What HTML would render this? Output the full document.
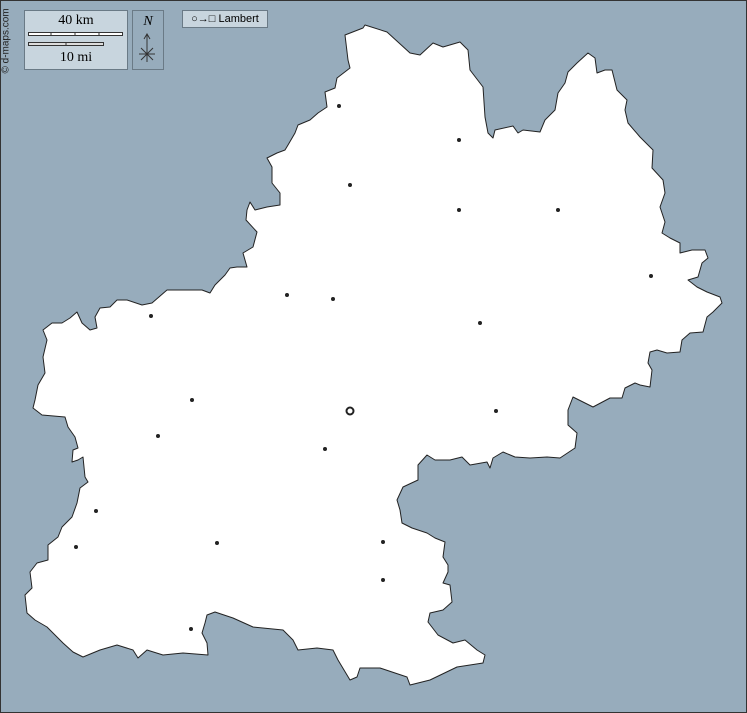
<!DOCTYPE html>
<html><head><style>
body{margin:0;width:747px;height:713px;overflow:hidden;background:#97acbc;font-family:"Liberation Serif",serif}
.box{position:absolute;background:#c8d5de;border:1px solid #6a7a86}
</style></head><body>
<svg width="747" height="713" style="position:absolute;left:0;top:0">
<rect x="0.5" y="0.5" width="746" height="712" fill="#97acbc" stroke="#333"/>
<polygon fill="#fff" stroke="#222" stroke-width="1" stroke-linejoin="round" points="
345,35 348,60 350,68 337,78 335,88 325,92 327,107 318,113 310,120 298,125 295,133 288,145 285,150 277,153 267,158 272,167 272,183 280,193 280,205 267,207 255,210 250,202 247,210 246,220 257,232 253,247 243,253 247,267 237,267 230,268 225,275 215,285
210,293 202,290 167,290 152,303 142,305 127,300 117,300 110,307 100,308 95,317 97,328 90,330 82,323 77,312 70,318 62,323 52,323 43,330 47,340 43,357 45,373 38,385 35,400 33,408 42,415 65,417 68,427 75,437 78,448 73,450 72,462 78,460 83,457 85,477 88,482 80,488 77,503 72,517 62,527 58,537 48,545 48,560 37,563 30,572 32,588 25,595 27,613 35,620 47,627 63,643 73,652 83,657 100,650 117,645 133,650 138,658 147,650 163,655 183,653 208,655 207,643 202,633 205,623 207,615 215,612 233,618 253,627 283,630 293,640 298,650 317,648 333,650 338,660 350,680 357,677 360,668 380,668 407,677 410,685 430,680 457,667 483,663 485,655 477,650 465,640 453,643 438,635 428,622 430,613 443,610 452,602 450,585 443,583 448,572 448,565 443,557 445,542 435,538 427,533 412,528 402,523 400,510 397,500 403,487 418,480 418,465 427,455 435,460 450,460 462,457 470,465 487,462
490,468 493,458 503,452 515,457 530,458 547,457 560,458 575,448 577,433 568,425 568,410 573,397 583,402 593,407 610,398 622,398 625,388 635,383 640,385 650,387 652,370 648,363 650,352 657,350 667,353 680,352 682,340 690,333 703,332 707,317 713,312 722,303 720,297 707,292 697,287 688,280 698,277 702,263 708,258 705,250 692,250 680,253 680,243 670,238 662,233 665,222 660,207 665,193 663,180 652,168 653,150 640,137 628,123 625,110 627,100 617,90 612,70 605,70 597,73 595,58 588,53 577,63 568,72 565,83 558,93 555,110 545,120 540,132 523,130 518,133 513,126 495,130 493,138
488,133 485,117 483,87 470,70 468,50 460,42 443,47 433,43 420,55 410,53 387,32 365,25 363,28"/>
<g fill="#222">
<circle cx="339" cy="106" r="2"/><circle cx="459" cy="140" r="2"/><circle cx="350" cy="185" r="2"/><circle cx="459" cy="210" r="2"/><circle cx="558" cy="210" r="2"/><circle cx="651" cy="276" r="2"/><circle cx="287" cy="295" r="2"/><circle cx="333" cy="299" r="2"/><circle cx="151" cy="316" r="2"/><circle cx="480" cy="323" r="2"/><circle cx="192" cy="400" r="2"/><circle cx="496" cy="411" r="2"/><circle cx="158" cy="436" r="2"/><circle cx="325" cy="449" r="2"/><circle cx="96" cy="511" r="2"/><circle cx="76" cy="547" r="2"/><circle cx="217" cy="543" r="2"/><circle cx="383" cy="542" r="2"/><circle cx="383" cy="580" r="2"/><circle cx="191" cy="629" r="2"/>
</g>
<circle cx="350" cy="411" r="3.5" fill="none" stroke="#222" stroke-width="2"/>
</svg>
<div class="box" style="left:24px;top:10px;width:102px;height:58px"></div>
<div style="position:absolute;left:24px;top:13px;width:104px;text-align:center;font-size:14px">40 km</div>
<svg width="747" height="713" style="position:absolute;left:0;top:0">
<rect x="28.5" y="32.5" width="94" height="3" fill="#fff" stroke="#333"/>
<line x1="51" y1="32" x2="51" y2="36" stroke="#333"/><line x1="75" y1="32" x2="75" y2="36" stroke="#333"/><line x1="99" y1="32" x2="99" y2="36" stroke="#333"/>
<rect x="28.5" y="42.5" width="75" height="3" fill="#ddd" stroke="#333"/>
<line x1="66" y1="42" x2="66" y2="46" stroke="#333"/>
<line x1="147" y1="34" x2="147" y2="62" stroke="#333"/><polyline points="144,39 147,34 150,39" fill="none" stroke="#333"/>
<line x1="139" y1="54" x2="155" y2="54" stroke="#333"/><line x1="141" y1="48" x2="153" y2="60" stroke="#333"/><line x1="153" y1="48" x2="141" y2="60" stroke="#333"/>
</svg>
<div style="position:absolute;left:24px;top:50px;width:104px;text-align:center;font-size:14px">10 mi</div>
<div class="box" style="left:132px;top:10px;width:30px;height:58px;background:transparent"></div>
<div style="position:absolute;left:132px;top:14px;width:32px;text-align:center;font-size:14px;font-style:italic">N</div>
<div class="box" style="left:182px;top:10px;width:84px;height:16px;font-family:'Liberation Sans',sans-serif;font-size:11px;line-height:16px;text-align:center">○→□ Lambert</div>
<div style="position:absolute;left:-26px;top:36px;width:64px;transform:rotate(-90deg);font-family:'Liberation Sans',sans-serif;font-size:10px;color:#222;white-space:nowrap">© d-maps.com</div>
</body></html>
